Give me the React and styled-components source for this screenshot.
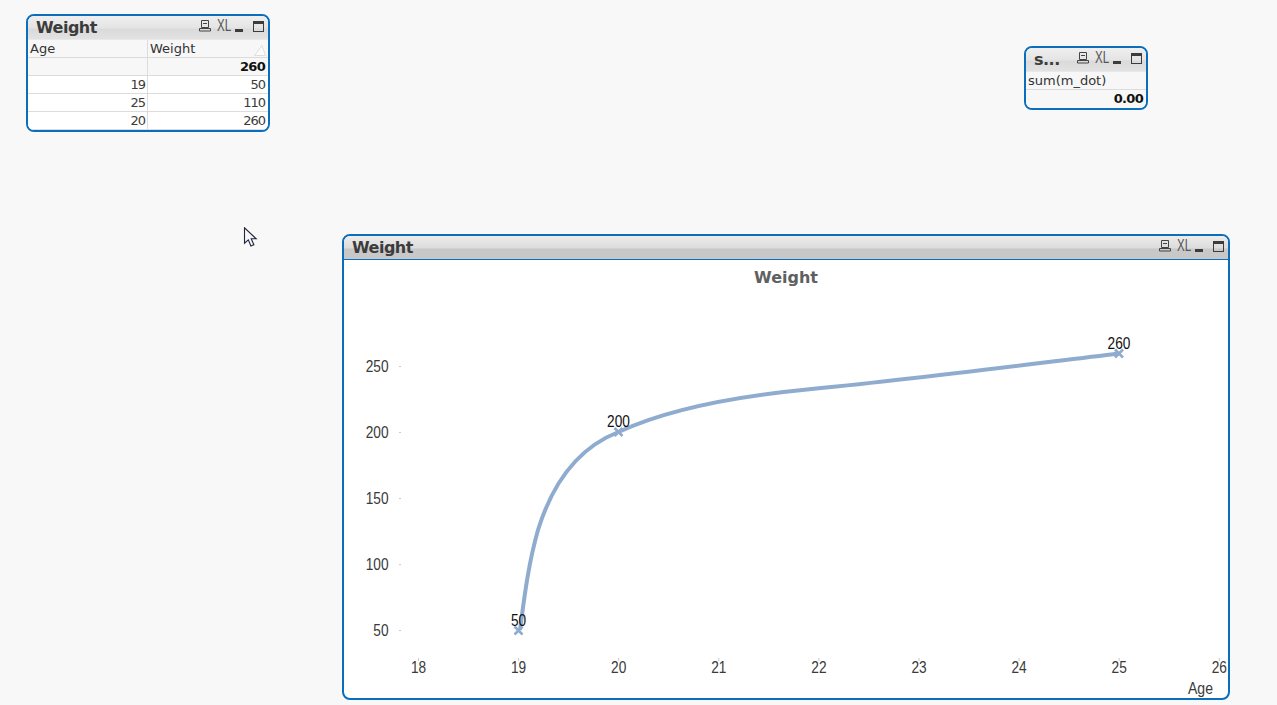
import React from "react";
import styled, { createGlobalStyle } from "styled-components";

const GlobalStyle = createGlobalStyle`
  html, body {
    margin: 0;
    padding: 0;
    height: 100%;
    overflow: hidden;
    background: #f8f8f8;
  }
`;

const tableRows = [
  { age: "", weight: "260", total: true },
  { age: "19", weight: "50" },
  { age: "25", weight: "110" },
  { age: "20", weight: "260" },
];

const yTicks = [
  { label: "250", y: 366 },
  { label: "200", y: 432 },
  { label: "150", y: 498 },
  { label: "100", y: 564 },
  { label: "50", y: 630 },
];

const xTicks = [18, 19, 20, 21, 22, 23, 24, 25, 26];

const points = [
  { label: "50", x: 518.5, y: 630.5 },
  { label: "200", x: 618.5, y: 432 },
  { label: "260", x: 1119, y: 353.5 },
];

const curvePath =
  "M520 630C524 600 528 565 538 530C551 488 575 449 618.5 432C670 408 740 396 807 389.5C910 379.5 1015 366 1119 353.5";

// chart svg starts inside the window border
const ox = 344;
const oy = 260;

// the chart font is a narrow one, so squeeze the glyphs to that width
const narrow = (text) => ({
  textLength: String(text).length * 7.6,
  lengthAdjust: "spacingAndGlyphs",
});

function WindowButtons() {
  return (
    <Buttons>
      <svg width="12" height="12" viewBox="0 0 12 12">
        <path d="M2.5 .5h7v7h-7zM.5 8.5h11v2.5h-11zM4 3.5h4" fill="none" stroke="#444" strokeWidth="1" />
      </svg>
      <XL>XL</XL>
      <Minimize />
      <Maximize />
    </Buttons>
  );
}

function CaptionBar({ title, dark }) {
  return (
    <Caption $dark={dark}>
      <Title>{title}</Title>
      <WindowButtons />
    </Caption>
  );
}

function WeightTable() {
  return (
    <Table>
      <HeadCell>Age</HeadCell>
      <HeadCell>
        Weight
        <SortMark viewBox="0 0 12 11" width="12" height="11">
          <path d="M.5 10.5L8 .5L11.5 10.5z" fill="#fbfbfb" stroke="#dedede" />
        </SortMark>
      </HeadCell>
      {tableRows.map((row, i) => (
        <React.Fragment key={i}>
          <Cell $total={row.total}>{row.age}</Cell>
          <Cell $total={row.total}>{row.weight}</Cell>
        </React.Fragment>
      ))}
    </Table>
  );
}

function LineChart() {
  return (
    <ChartBody>
      <ChartTitle>Weight</ChartTitle>
      <ChartSvg viewBox={`${ox} ${oy} 884 438`} width="884" height="438">
        {yTicks.map((t) => (
          <g key={t.label}>
            <line x1="399" x2="401" y1={t.y + 0.5} y2={t.y + 0.5} stroke="#c8c8c8" />
            <AxisText x="388.5" y={t.y + 6} textAnchor="end" {...narrow(t.label)}>{t.label}</AxisText>
          </g>
        ))}
        {xTicks.map((v, i) => {
          const x = 418.5 + i * 100.1;
          return (
            <g key={v}>
              <line x1={x} x2={x} y1="658" y2="661" stroke="#c8c8c8" />
              <AxisText x={x} y="673" textAnchor="middle" {...narrow(v)}>{v}</AxisText>
            </g>
          );
        })}
        <AxisText x="1213" y="694" textAnchor="end" textLength="25" lengthAdjust="spacingAndGlyphs">Age</AxisText>
        <path d={curvePath} fill="none" stroke="#8faccf" strokeWidth="4" />
        {points.map((p) => (
          <g key={p.label}>
            <path
              d={`M${p.x - 4} ${p.y - 4}l8 8m0 -8l-8 8`}
              stroke="#8faccf"
              strokeWidth="2.6"
              fill="none"
            />
            <ValueText x={p.x} y={p.y - 5} textAnchor="middle" {...narrow(p.label)}>{p.label}</ValueText>
          </g>
        ))}
      </ChartSvg>
    </ChartBody>
  );
}

export default function App() {
  return (
    <>
      <GlobalStyle />
      <Desktop>
        <Window $left={26} $top={14} $width={244} $height={118}>
          <CaptionBar title="Weight" />
          <WeightTable />
        </Window>

        <Window $left={1024} $top={46} $width={124} $height={64}>
          <CaptionBar title="s..." />
          <SumHead>sum(m_dot)</SumHead>
          <SumValue>0.00</SumValue>
        </Window>

        <Window $left={342} $top={234} $width={888} $height={466}>
          <CaptionBar title="Weight" dark />
          <LineChart />
        </Window>

        <Pointer width="15" height="21" viewBox="0 0 15 21">
          <path
            d="M1.5 .8v15.4l3.8-3.4 2.6 6.2 3-1.3-2.7-5.9h5z"
            fill="#f4f6fa"
            stroke="#23263a"
            strokeWidth="1.1"
          />
        </Pointer>
      </Desktop>
    </>
  );
}

const Desktop = styled.div`
  position: relative;
  width: 1277px;
  height: 705px;
  overflow: hidden;
  background: #f8f8f8;
`;

const Window = styled.section`
  position: absolute;
  left: ${(p) => p.$left}px;
  top: ${(p) => p.$top}px;
  width: ${(p) => p.$width}px;
  height: ${(p) => p.$height}px;
  box-sizing: border-box;
  display: flex;
  flex-direction: column;
  border: 2px solid #0a6ebd;
  border-radius: 8px;
  background: #fff;
  overflow: hidden;
`;

const Caption = styled.header`
  flex: none;
  height: 24px;
  box-sizing: border-box;
  display: flex;
  align-items: center;
  justify-content: space-between;
  padding: 0 4px 0 8px;
  border-bottom: 1px solid ${(p) => (p.$dark ? "#0a6ebd" : "#e9e9e9")};
  background: ${(p) =>
    p.$dark
      ? "linear-gradient(#ececec 0, #dcdcdc 12px, #c8c8c8 13px, #c8c8c8 100%)"
      : "linear-gradient(#efefef 0, #e4e4e4 12px, #dadada 13px, #e2e2e2 100%)"};
`;

const Title = styled.h2`
  margin: 0;
  font: bold 16px "DejaVu Sans", sans-serif;
  letter-spacing: -0.5px;
  color: #3c3c3c;
  white-space: nowrap;
`;

const Buttons = styled.div`
  display: flex;
  align-items: center;
  gap: 6px;
  margin-top: -3px;
`;

const XL = styled.span`
  width: 12px;
  font: 16px "Liberation Sans", sans-serif;
  color: #555;
  transform: scaleX(0.72);
  transform-origin: left center;
  margin-right: -1px;
  letter-spacing: 0;
`;

const Minimize = styled.i`
  display: block;
  width: 8px;
  height: 3px;
  margin: 8px 4px 0 1px;
  background: #3c3c3c;
`;

const Maximize = styled.i`
  display: block;
  width: 11px;
  height: 11px;
  box-sizing: border-box;
  border: 1px solid #3c3c3c;
  border-top-width: 3px;
`;

const Table = styled.div`
  display: grid;
  grid-template-columns: 120px 120px;
  grid-auto-rows: 18px;
  font: 13px "DejaVu Sans", sans-serif;
  color: #333;
`;

const HeadCell = styled.div`
  position: relative;
  padding-left: 2px;
  line-height: 17px;
  background: #f7f7f7;
  border-bottom: 1px solid #dcdcdc;
  border-right: 1px solid #dcdcdc;
  &:nth-child(2) {
    border-right: 0;
  }
`;

const SortMark = styled.svg`
  position: absolute;
  right: 2px;
  top: 5px;
`;

const Cell = styled.div`
  padding-right: 2px;
  text-align: right;
  line-height: 17px;
  letter-spacing: ${(p) => (p.$total ? "-0.7px" : "-1px")};
  font-weight: ${(p) => (p.$total ? "bold" : "normal")};
  color: ${(p) => (p.$total ? "#111" : "#3c3c3c")};
  background: ${(p) => (p.$total ? "#f7f7f7" : "#fff")};
  border-bottom: 1px solid #dcdcdc;
  border-right: 1px solid #dcdcdc;
  &:nth-child(even) {
    border-right: 0;
    padding-right: 3px;
  }
`;

const SumHead = styled.div`
  height: 18px;
  box-sizing: border-box;
  padding-left: 2px;
  font: 13px/17px "DejaVu Sans", sans-serif;
  color: #333;
  background: #f7f7f7;
  border-bottom: 1px solid #dcdcdc;
`;

const SumValue = styled.div`
  flex: 1;
  padding-right: 3px;
  text-align: right;
  font: bold 13px/17px "DejaVu Sans", sans-serif;
  letter-spacing: -0.7px;
  color: #111;
  background: #f7f7f7;
`;

const ChartBody = styled.div`
  flex: 1;
  display: flex;
  flex-direction: column;
  min-height: 0;
`;

const ChartTitle = styled.h3`
  position: absolute;
  left: 0;
  right: 0;
  top: 32px;
  margin: 0;
  text-align: center;
  font: bold 16px "DejaVu Sans", sans-serif;
  color: #606060;
`;

const ChartSvg = styled.svg`
  display: block;
`;

const AxisText = styled.text`
  font: 16.5px "Liberation Sans", sans-serif;
  fill: #3a3a3a;
`;

const ValueText = styled.text`
  font: 16.5px "Liberation Sans", sans-serif;
  fill: #111;
`;

const Pointer = styled.svg`
  position: absolute;
  left: 243px;
  top: 227px;
`;
